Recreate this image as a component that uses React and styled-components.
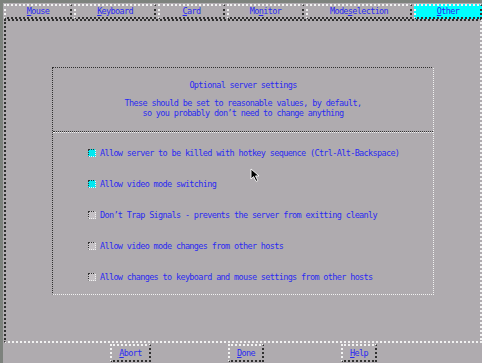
import styled, { createGlobalStyle } from "styled-components"

const BG = "#afabaf"
const DARK = "#303030"
const LIGHT = "#f2f2f2"
const BLUE = "#2a2af2"

const GlobalStyle = createGlobalStyle`
  html, body {
    margin: 0;
    padding: 0;
    background: #7d827d;
  }
  body {
    font-family: "DejaVu Sans Mono", "Liberation Mono", monospace;
    font-size: 8.5px;
    letter-spacing: -0.65px;
    color: ${BLUE};
  }
`

const tabs = [
  { label: "Mouse", key: 0, width: 68 },
  { label: "Keyboard", key: 0, width: 82 },
  { label: "Card", key: 0, width: 67 },
  { label: "Monitor", key: 2, width: 77 },
  { label: "Modeselection", key: 4, width: 106 },
  { label: "Other", key: 0, active: true },
]

const options = [
  { text: "Allow server to be killed with hotkey sequence (Ctrl-Alt-Backspace)", on: true },
  { text: "Allow video mode switching", on: true },
  { text: "Don't Trap Signals - prevents the server from exitting cleanly" },
  { text: "Allow video mode changes from other hosts" },
  { text: "Allow changes to keyboard and mouse settings from other hosts" },
]

const buttons = [
  { label: "Abort", width: 41 },
  { label: "Done", width: 36 },
  { label: "Help", width: 36 },
]

const Mnemonic = ({ text, at }) => (
  <>
    {text.slice(0, at)}
    <u>{text[at]}</u>
    {text.slice(at + 1)}
  </>
)

const App = () => {
  return (
    <Screen>
      <GlobalStyle />
      <Window>
        <TabBar>
          {tabs.map((t) => (
            <Tab key={t.label} $width={t.width} $active={t.active}>
              <Mnemonic text={t.label} at={t.key} />
            </Tab>
          ))}
        </TabBar>

        <Panel>
          <Frame>
            <Header>
              <Title>Optional server settings</Title>
              <p>These should be set to reasonable values, by default,</p>
              <p>so you probably don’t need to change anything</p>
            </Header>
            <Divider />
            <Options>
              {options.map((o) => (
                <Option key={o.text}>
                  <Check $on={o.on} />
                  {o.text.replace("'", "’")}
                </Option>
              ))}
            </Options>
          </Frame>
        </Panel>

        <ButtonRow>
          {buttons.map((b) => (
            <Button key={b.label} $width={b.width}>
              <Mnemonic text={b.label} at={0} />
            </Button>
          ))}
        </ButtonRow>
      </Window>

      <Pointer width="14" height="15" viewBox="0 0 14 15">
        <path
          d="M1 1 L1 11 L3.6 8.6 L6 13.4 L7.8 12.6 L5.5 7.9 L9 7.9 Z"
          fill="#000"
          stroke="#fff"
          strokeWidth="0.9"
          strokeLinejoin="miter"
        />
      </Pointer>
    </Screen>
  )
}

const Screen = styled.div`
  position: relative;
  width: 482px;
  height: 363px;
  box-sizing: border-box;
  padding: 3px 0 0 3px;
  background: #7d827d;
  overflow: hidden;
`

const Window = styled.div`
  height: 100%;
  box-sizing: border-box;
  padding: 1px 0 0 1px;
  display: flex;
  flex-direction: column;
  background: ${BG};
`

const TabBar = styled.div`
  display: flex;
  gap: 2px;
  height: 15px;
`

const Tab = styled.div`
  flex: ${(p) => (p.$width ? `0 0 ${p.$width}px` : "1 1 auto")};
  box-sizing: border-box;
  display: flex;
  align-items: center;
  justify-content: center;
  border: 2px dotted;
  border-color: ${LIGHT} ${DARK} ${DARK} ${LIGHT};
  background: ${(p) => (p.$active ? "#00ffff" : BG)};
  line-height: 1;
`

const Panel = styled.div`
  flex: 1;
  margin-right: 0;
  box-sizing: border-box;
  padding: 46px;
  border: 2px dotted;
  border-color: ${DARK} ${LIGHT} ${LIGHT} ${DARK};
  display: flex;
`

const Frame = styled.div`
  flex: 1;
  display: flex;
  flex-direction: column;
  border: 1px dotted;
  border-color: ${DARK} ${LIGHT} ${LIGHT} ${DARK};
`

const Header = styled.div`
  padding: 12px 0 13px;
  text-align: center;
  line-height: 10px;

  p {
    margin: 0;
  }
`

const Title = styled.p`
  && {
    margin-bottom: 8px;
  }
`

const Divider = styled.div`
  border-top: 1px dotted ${DARK};
  border-bottom: 1px dotted ${LIGHT};
`

const Options = styled.div`
  padding: 4px 0 0 35px;
  display: flex;
  flex-direction: column;
`

const Option = styled.div`
  height: 31px;
  display: flex;
  align-items: center;
  gap: 4px;
  white-space: nowrap;
`

const Check = styled.span`
  width: 8px;
  height: 8px;
  box-sizing: border-box;
  flex: none;
  border: 1px dotted;
  border-color: ${DARK} ${LIGHT} ${LIGHT} ${DARK};
  background: ${(p) => (p.$on ? "#00e8f0" : "#c4c0c4")};
`

const ButtonRow = styled.div`
  height: 20px;
  box-sizing: border-box;
  padding: 1px 0 0 106px;
  display: flex;
  align-items: flex-start;
  gap: 77px;
`

const Button = styled.div`
  width: ${(p) => p.$width}px;
  height: 18px;
  box-sizing: border-box;
  display: flex;
  align-items: center;
  justify-content: center;
  border: 2px dotted;
  border-color: ${LIGHT} ${DARK} ${DARK} ${LIGHT};
`

const Pointer = styled.svg`
  position: absolute;
  left: 250px;
  top: 168px;
`

export default App
